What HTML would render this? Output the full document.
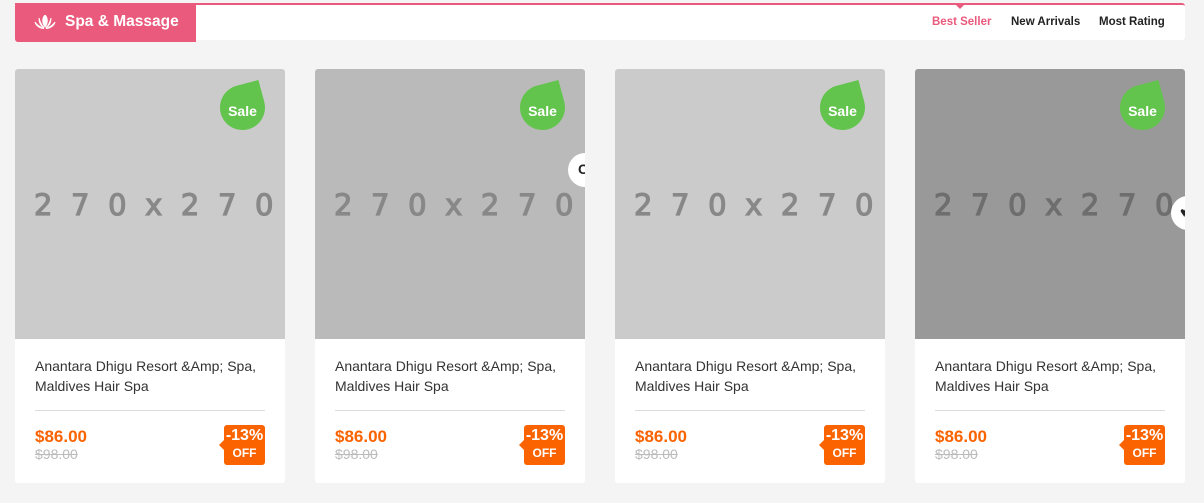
<!DOCTYPE html>
<html><head><meta charset="utf-8"><style>
*{margin:0;padding:0;box-sizing:border-box}
body{width:1204px;height:503px;background:#f4f4f4;font-family:"Liberation Sans",sans-serif;position:relative;overflow:hidden}
.hdr{position:absolute;left:15px;top:3px;width:1170px;height:37px;background:#fff;border-top:2px solid #e95a7c;border-radius:0 3px 3px 3px}
.tab{position:absolute;left:0;top:-2px;width:181px;height:39px;background:#e95a7c;border-radius:3px 0 0 3px;color:#fff;font-weight:bold;font-size:15.5px;line-height:37px;padding-left:50px}
.tab svg{position:absolute;left:19px;top:12px}
.nav{position:absolute;top:11px;font-size:11.5px;font-weight:bold;color:#222}
.card{position:absolute;top:69px;width:270px;height:414px;background:#fff;border-radius:3px;overflow:hidden}
.img{height:270px;position:relative;overflow:hidden}
.ph{position:absolute;left:19px;top:119px;font-size:29px;letter-spacing:18.6px;font-family:"DejaVu Sans",sans-serif;color:#888;white-space:nowrap;-webkit-text-stroke:1.2px currentColor}
.sale{position:absolute;left:205px;top:16px;width:45px;height:45px;background:#62c44d;border-radius:50% 0 50% 50%;transform:rotate(-15deg)}
.salet{position:absolute;left:205px;top:34px;width:45px;text-align:center;color:#fff;font-weight:bold;font-size:14px}
.circ{position:absolute;width:34px;height:34px;background:#fff;border-radius:50%}
.t{position:absolute;left:20px;top:287px;font-size:14px;line-height:20px;color:#333}
.ln{position:absolute;left:20px;top:341px;width:230px;height:1px;background:#ddd}
.p{position:absolute;left:20px;top:358px;font-size:17px;font-weight:bold;color:#fa6300}
.o{position:absolute;left:20px;top:377px;font-size:14px;color:#bbb;text-decoration:line-through}
.off{position:absolute;left:209px;top:356px;width:41px;height:40px;background:#fa6300;border-radius:3px;color:#fff;font-weight:bold;text-align:center}
.off:before{content:"";position:absolute;left:-5px;top:15px;border:5px solid transparent;border-right-color:#fa6300;border-left:0}
.off b{display:block;font-size:16px;line-height:21px}
.off i{display:block;font-style:normal;font-size:12px;line-height:14px}
</style></head><body>
<div class="hdr">
<div class="tab"><svg width="22" height="14" viewBox="0 0 20 14"><path d="M10 0C7 3 7 8 10 12C13 8 13 3 10 0ZM4 3C4 8 6 11 9 12.5C6 10 5 7 4 3ZM16 3C16 8 14 11 11 12.5C14 10 15 7 16 3ZM0 7C1 11 5 13.5 9 13.5C5 12 2 10 0 7ZM20 7C19 11 15 13.5 11 13.5C15 12 18 10 20 7Z" fill="#fff" stroke="#fff" stroke-width="1"/></svg>Spa &amp; Massage</div>
<div style="position:absolute;left:940px;top:-1px;border:5px solid transparent;border-top-color:#e95a7c"></div>
<div class="nav" style="left:917px;color:#e95a7c">Best Seller</div>
<div class="nav" style="left:996px">New Arrivals</div>
<div class="nav" style="left:1084px">Most Rating</div>
</div>

<div class="card" style="left:15px"><div class="img" style="background:#cbcbcb"><div class="ph">270x270</div><div class="sale"></div><div class="salet">Sale</div></div>
<div class="t">Anantara Dhigu Resort &amp;Amp; Spa,<br>Maldives Hair Spa</div><div class="ln"></div><div class="p">$86.00</div><div class="o">$98.00</div><div class="off"><b>-13%</b><i>OFF</i></div></div>

<div class="card" style="left:315px"><div class="img" style="background:#bababa"><div class="ph">270x270</div><div class="sale"></div><div class="salet">Sale</div><div class="circ" style="left:253px;top:84px"></div><div style="position:absolute;left:263px;top:92px;font-size:14px;font-weight:bold;color:#222">C</div></div>
<div class="t">Anantara Dhigu Resort &amp;Amp; Spa,<br>Maldives Hair Spa</div><div class="ln"></div><div class="p">$86.00</div><div class="o">$98.00</div><div class="off"><b>-13%</b><i>OFF</i></div></div>

<div class="card" style="left:615px"><div class="img" style="background:#cbcbcb"><div class="ph">270x270</div><div class="sale"></div><div class="salet">Sale</div></div>
<div class="t">Anantara Dhigu Resort &amp;Amp; Spa,<br>Maldives Hair Spa</div><div class="ln"></div><div class="p">$86.00</div><div class="o">$98.00</div><div class="off"><b>-13%</b><i>OFF</i></div></div>

<div class="card" style="left:915px"><div class="img" style="background:#999"><div class="ph" style="color:#6e6e6e">270x270</div><div class="sale"></div><div class="salet">Sale</div><div class="circ" style="left:256px;top:127px"></div><div style="position:absolute;left:265px;top:135px;font-size:14px;color:#222">♥</div></div>
<div class="t">Anantara Dhigu Resort &amp;Amp; Spa,<br>Maldives Hair Spa</div><div class="ln"></div><div class="p">$86.00</div><div class="o">$98.00</div><div class="off"><b>-13%</b><i>OFF</i></div></div>
</body></html>
